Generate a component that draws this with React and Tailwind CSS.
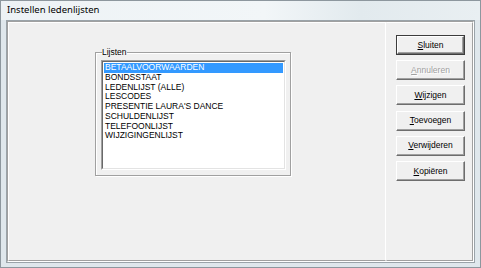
import React from "react";

const items = [
  "BETAALVOORWAARDEN",
  "BONDSSTAAT",
  "LEDENLIJST (ALLE)",
  "LESCODES",
  "PRESENTIE LAURA'S DANCE",
  "SCHULDENLIJST",
  "TELEFOONLIJST",
  "WIJZIGINGENLIJST",
];

function Btn({ u, rest, disabled, def }) {
  const inner = (
    <div className={(def ? "h-[18px] w-[67px]" : "h-[20px] w-[69px]") + " bg-[#f0f0f0] border border-t-white border-l-white border-r-[#6d6d6d] border-b-[#6d6d6d] shadow-[inset_-1px_-1px_0_#a0a0a0] flex items-center justify-center"}>
      <span className={disabled ? "text-[#a0a0a0] [text-shadow:1px_1px_0_#fff]" : "text-black"}>
        <span className="underline underline-offset-[1px]">{u}</span>
        {rest}
      </span>
    </div>
  );
  if (def) {
    return <div className="border border-[#3c3c3c] w-[69px] h-[20px]">{inner}</div>;
  }
  return inner;
}

export default function App() {
  return (
    <div
      className="w-[481px] h-[268px] bg-[#dfe7ec] border border-[#8d979e] flex flex-col text-[8.5px]"
      style={{ fontFamily: "'Liberation Sans', Arial, sans-serif" }}
    >
      <div className="h-[19px] bg-[linear-gradient(90deg,#edf2f5_0%,#f2f6f8_55%,#e2eaee_75%,#e9eff2_100%)] flex items-center pl-[6px] text-[9.5px] text-black" style={{ fontFamily: "'Noto Sans', 'Open Sans', sans-serif" }}>
        Instellen ledenlijsten
      </div>
      <div className="flex-1 mx-[5px] mb-[4px] border border-[#9aa3a9] bg-[#f0f0f0] flex">
        <div className="flex-1 flex border border-t-[#a0a0a0] border-l-[#a0a0a0] border-r-white border-b-white">
          <div className="flex-1 border border-t-white border-l-white border-r-white border-b-[#a0a0a0] pl-[86px] pt-[25px]">
            <fieldset className="w-[196px] h-[128px] border border-[#a0a0a0] shadow-[1px_1px_0_#fff,inset_1px_1px_0_#fff] pl-[5px] pr-[4px] pb-[6px] m-0">
              <legend className="ml-[1px] px-0 text-[8.5px] leading-[9px] -mb-[1px]">Lijsten</legend>
              <div className="mt-[4px] h-[110px] bg-white border border-t-[#a0a0a0] border-l-[#a0a0a0] border-r-white border-b-white">
                <div className="h-full border border-t-[#696969] border-l-[#696969] border-r-[#e3e3e3] border-b-[#e3e3e3] px-[1px] pt-[1px]">
                  {items.map((it, i) => (
                    <div
                      key={it}
                      className={
                        "h-[9.75px] leading-[9.75px] pl-[1px] whitespace-nowrap " +
                        (i === 0 ? "bg-[#3399ff] text-white" : "text-black")
                      }
                    >
                      {it}
                    </div>
                  ))}
                </div>
              </div>
            </fieldset>
          </div>
          <div className="w-[87px] border border-t-white border-l-transparent border-r-[#a0a0a0] border-b-[#a0a0a0] pl-[9px] pt-[12px] flex flex-col gap-[5.2px]">
            <Btn def u="S" rest="luiten" />
            <Btn disabled u="A" rest="nnuleren" />
            <Btn u="W" rest="ijzigen" />
            <Btn u="T" rest="oevoegen" />
            <Btn u="V" rest="erwijderen" />
            <Btn u="K" rest="opiëren" />
          </div>
        </div>
      </div>
    </div>
  );
}
